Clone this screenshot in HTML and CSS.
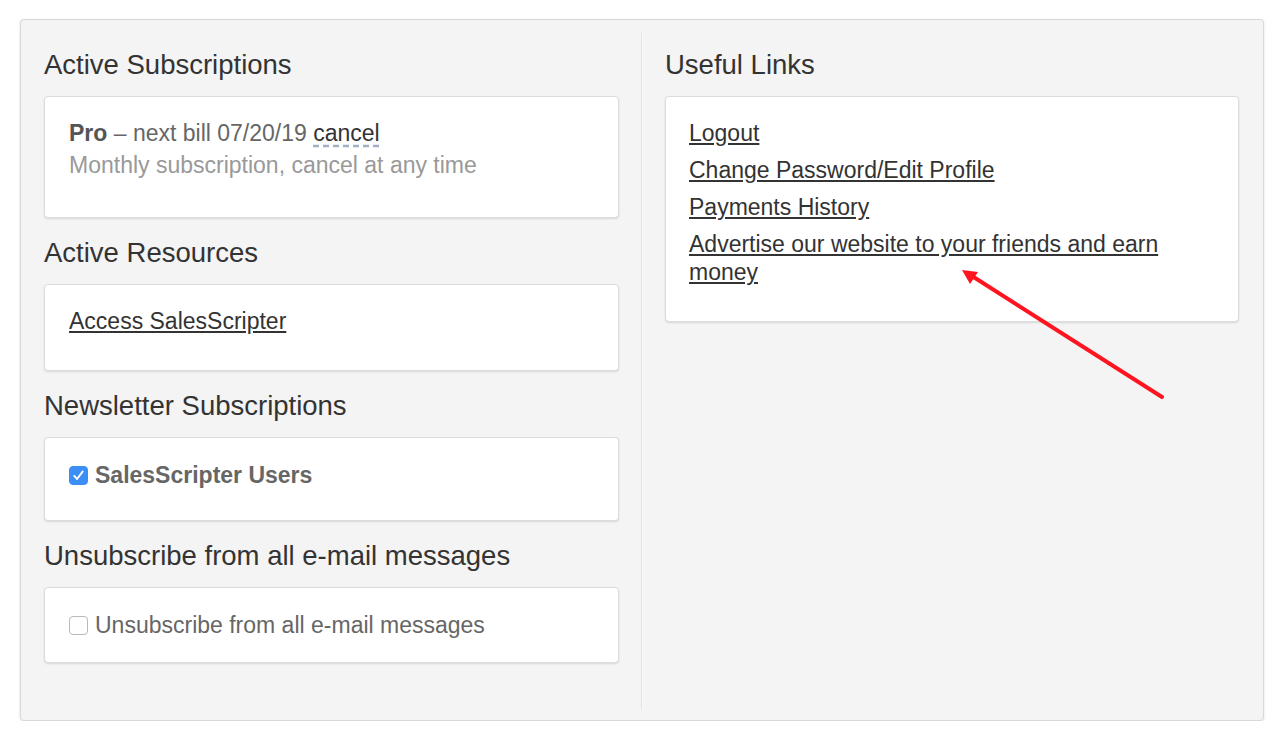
FILE: index.html
```html
<!DOCTYPE html>
<html lang="en">
<head>
<meta charset="UTF-8" />
<meta name="viewport" content="width=device-width, initial-scale=1" />
<title>My Account</title>
<link rel="stylesheet" href="styles.css">
</head>
<body>

<div class="account">
  <div class="col col-left">
    <h2>Active Subscriptions</h2>
    <div class="card card-subs">
      <p class="plan"><strong>Pro</strong> &ndash; next bill 07/20/19 <a href="#" class="cancel">cancel</a></p>
      <p class="note">Monthly subscription, cancel at any time</p>
    </div>

    <h2>Active Resources</h2>
    <div class="card card-res">
      <p><a href="#">Access SalesScripter</a></p>
    </div>

    <h2>Newsletter Subscriptions</h2>
    <div class="card card-news">
      <label class="check check-bold">
        <span class="box checked">
          <svg viewBox="0 0 20 20" width="19" height="19"><path d="M5.5 10.5l3 3.2 6-8" fill="none" stroke="#fff" stroke-width="2" stroke-linecap="round" stroke-linejoin="round"/></svg>
        </span>
        SalesScripter Users
      </label>
    </div>

    <h2>Unsubscribe from all e-mail messages</h2>
    <div class="card card-unsub">
      <label class="check">
        <span class="box"></span>
        Unsubscribe from all e-mail messages
      </label>
    </div>
  </div>

  <div class="col col-right">
    <h2>Useful Links</h2>
    <div class="card card-links">
      <ul class="links">
        <li><a href="#">Logout</a></li>
        <li><a href="#">Change Password/Edit Profile</a></li>
        <li><a href="#">Payments History</a></li>
        <li><a href="#">Advertise our website to your friends and earn money</a></li>
      </ul>
    </div>
  </div>
</div>

<!-- annotation arrow -->
<svg class="arrow" width="1286" height="738" viewBox="0 0 1286 738">
  <line x1="1162" y1="397" x2="972" y2="276" stroke="#ff1420" stroke-width="4" stroke-linecap="round"/>
  <polygon points="962,270 978,272 970,284" fill="#ff1420"/>
</svg>

</body>
</html>
```

FILE: styles.css
```css
* {
  box-sizing: border-box;
}
body {
  margin: 0;
  padding: 19px 22px 0 20px;
  position: relative;
  background: #fff;
  font-family: "Liberation Sans", Arial, Helvetica, sans-serif;
  color: #333;
}

/* Panel */
.account {
  display: flex;
  background: #f4f4f4;
  border: 1px solid #d8d8d8;
  border-radius: 4px;
  box-shadow: 0 1px 3px rgba(0,0,0,0.12);
}
.col-left {
  width: 620px;
  flex: none;
  padding: 29px 22px 57px 23px;
}
.col-right {
  flex: 1;
  margin: 13px 0 11px;
  padding: 16px 24px 0 23px;
  border-left: 1px solid #e3e3e3;
  box-shadow: inset 1px 0 0 #fafafa;
}

h2 {
  font-size: 27.5px;
  font-weight: normal;
  line-height: 32px;
  color: #333;
  margin: 19px 0 15px;
}
.col h2:first-child {
  margin-top: 0;
}

/* Cards */
.card {
  background: #fff;
  border: 1px solid #dcdcdc;
  border-radius: 4px;
  box-shadow: 0 1px 2px rgba(0,0,0,0.12);
  padding: 20px 24px 33px;
  font-size: 23px;
  line-height: 32px;
}
.card p {
  margin: 0;
}
.card a {
  color: #333;
}
.card-subs {
  padding-bottom: 36px;
}
.card-news {
  padding-top: 21px;
  padding-bottom: 29px;
}
.card-unsub {
  padding-top: 21px;
  padding-bottom: 21px;
}
.card-links {
  padding: 22px 24px 35px 23px;
}

.plan {
  color: #666;
}
.plan strong {
  color: #555;
}
.plan .cancel {
  color: #333;
  text-decoration: underline dashed #9fb0c2;
  text-underline-offset: 4px;
}
.note {
  color: #999;
}

/* Checkboxes */
.check {
  display: flex;
  align-items: center;
  gap: 7px;
  color: #666;
}
.check-bold {
  font-weight: bold;
}
.box {
  width: 19px;
  height: 19px;
  border: 1px solid #b9b9b9;
  border-radius: 4px;
  background: #fff;
  display: flex;
}
.box.checked {
  background: #3a8ef5;
  border-color: #3a8ef5;
}
.box svg {
  margin: -1px;
}

/* Links list */
.links {
  list-style: none;
  margin: 0;
  padding: 0;
  line-height: 28px;
}
.links li + li {
  margin-top: 9px;
}

.arrow {
  position: absolute;
  top: 0;
  left: 0;
  pointer-events: none;
}
```
